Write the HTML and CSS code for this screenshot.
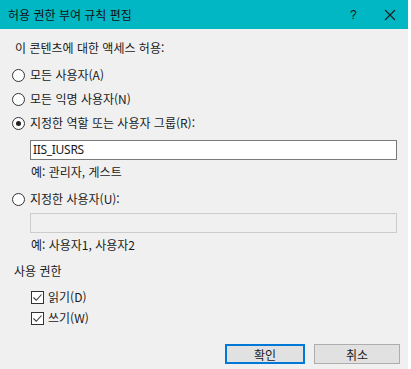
FILE: index.html
```html
<!DOCTYPE html>
<html lang="ko">
<head>
<meta charset="utf-8">
<link rel="stylesheet" href="styles.css">
</head>
<body>
<div class="dialog">
  <div class="titlebar">
    <span class="title">허용 권한 부여 규칙 편집</span>
    <span class="help">?</span>
    <span class="close">
      <svg width="12" height="12" viewBox="0 0 12 12"><path d="M1 1 L11 11 M11 1 L1 11" stroke="#1a1a1a" stroke-width="1.1" fill="none"/></svg>
    </span>
  </div>
  <div class="content">
    <div class="label l1">이 콘텐츠에 대한 액세스 허용:</div>
    <div class="radio r1"><span class="circle"></span><span>모든 사용자(A)</span></div>
    <div class="radio r2"><span class="circle"></span><span>모든 익명 사용자(N)</span></div>
    <div class="radio r3"><span class="circle on"></span><span>지정한 역할 또는 사용자 그룹(R):</span></div>
    <div class="field t1">IIS_IUSRS</div>
    <div class="hint h1">예: 관리자, 게스트</div>
    <div class="radio r4"><span class="circle"></span><span>지정한 사용자(U):</span></div>
    <div class="field disabled t2"></div>
    <div class="hint h2">예: 사용자1, 사용자2</div>
    <div class="label l2">사용 권한</div>
    <div class="check c1"><span class="box"><svg width="11" height="11" viewBox="0 0 11 11"><path d="M1.5 5.5 L4.3 8.3 L9.5 2.5" stroke="#333" stroke-width="1.1" fill="none"/></svg></span><span>읽기(D)</span></div>
    <div class="check c2"><span class="box"><svg width="11" height="11" viewBox="0 0 11 11"><path d="M1.5 5.5 L4.3 8.3 L9.5 2.5" stroke="#333" stroke-width="1.1" fill="none"/></svg></span><span>쓰기(W)</span></div>
    <div class="buttons">
      <div class="btn default">확인</div>
      <div class="btn">취소</div>
    </div>
  </div>
</div>
</body>
</html>
```

FILE: styles.css
```css
html, body {
  margin: 0;
  padding: 0;
  background: #ffffff;
}
body {
  font-family: "Noto Sans CJK KR", "Noto Sans", sans-serif;
  font-size: 12px;
  color: #1a1a1a;
}
.dialog {
  width: 408px;
  height: 369px;
  background: #f0f0f0;
  display: flex;
  flex-direction: column;
}
.titlebar {
  height: 29px;
  background: #00b7c3;
  display: flex;
  align-items: center;
  padding-left: 8px;
  box-sizing: border-box;
}
.title {
  flex: 1;
  font-size: 12px;
  color: #111;
}
.help {
  width: 12px;
  margin-right: 22px;
  font-family: "Liberation Sans", sans-serif;
  font-size: 12px;
  color: #111;
}
.close {
  width: 12px;
  height: 12px;
  margin-right: 12px;
  display: flex;
}
.content {
  display: flex;
  flex-direction: column;
  padding: 0 8px 0 14px;
}
.label, .hint, .radio, .check {
  line-height: 16px;
  height: 16px;
}
.l1 { margin-top: 11px; padding-left: 1px; }
.radio {
  display: flex;
  align-items: center;
}
.circle {
  width: 11px;
  height: 11px;
  border: 1px solid #333;
  border-radius: 50%;
  background: #fff;
  margin-left: -2px;
  margin-right: 5px;
  box-sizing: content-box;
  display: flex;
  align-items: center;
  justify-content: center;
}
.circle.on::after {
  content: "";
  width: 5px;
  height: 5px;
  border-radius: 50%;
  background: #222;
}
.r1 { margin-top: 11px; }
.r2 { margin-top: 8px; }
.r3 { margin-top: 8px; }
.r4 { margin-top: 11px; }
.field {
  margin-left: 16px;
  width: 367px;
  height: 20px;
  box-sizing: border-box;
  border: 1px solid #7a7a7a;
  background: #fff;
  font-family: "Noto Sans", sans-serif;
  font-size: 12px;
  line-height: 18px;
  padding-left: 2px;
  letter-spacing: -0.3px;
}
.field.disabled {
  background: #f0f0f0;
  border-color: #cccccc;
}
.t1 { margin-top: 9px; }
.t2 { margin-top: 6px; }
.hint { margin-left: 17px; }
.h1 { margin-top: 4px; }
.h2 { margin-top: 4px; }
.l2 { margin-top: 10px; }
.check {
  display: flex;
  align-items: center;
  padding-left: 17px;
}
.box {
  width: 11px;
  height: 11px;
  border: 1px solid #333;
  background: #fff;
  margin-right: 4px;
  display: flex;
}
.c1 { margin-top: 10px; }
.c2 { margin-top: 5px; }
.buttons {
  display: flex;
  justify-content: flex-end;
  gap: 9px;
  margin-top: 18px;
}
.btn {
  height: 20px;
  box-sizing: border-box;
  border: 1px solid #adadad;
  background: #e1e1e1;
  display: flex;
  align-items: center;
  justify-content: center;
  font-size: 12px;
}
.btn:first-child { width: 80px; }
.btn:last-child { width: 86px; }
.btn.default {
  border: 2px solid #0078d7;
}
```
